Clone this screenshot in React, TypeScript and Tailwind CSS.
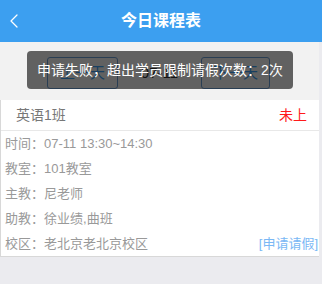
import { ChevronLeft } from "lucide-react";

const ROWS: { label: string; value: string }[] = [
  { label: "时间", value: "07-11 13:30~14:30" },
  { label: "教室", value: "101教室" },
  { label: "主教", value: "尼老师" },
  { label: "助教", value: "徐业绩,曲班" },
  { label: "校区", value: "老北京老北京校区" },
];

export default function App() {
  return (
    <div
      className="relative h-[284px] w-[322px] overflow-hidden bg-[#ebebef]"
      style={{ fontFamily: '"Liberation Sans", "Noto Sans CJK SC", sans-serif' }}
    >
      <header className="relative flex h-[42px] items-center justify-center bg-[#3c9ff0]">
        <ChevronLeft className="absolute left-[2px] top-[9px] h-[24px] w-[24px] text-white" strokeWidth={1.25} />
        <h1 className="text-[16px] font-bold text-white">今日课程表</h1>
      </header>

      <div className="w-[319px]">
        {/* day switcher, mostly hidden under the toast */}
        <div className="flex h-[58px] items-start bg-[#f2f2f2] pt-[15px]">
          <div className="ml-[47px] flex h-[32px] w-[71px] items-center justify-center rounded-[3px] border border-[#6a9bd0] text-[15px] text-[#3c9ff0]">
            上一天
          </div>
          <div className="flex h-[32px] flex-1 items-center justify-center text-[15px] text-[#333]">07-11</div>
          <div className="mr-[49px] flex h-[32px] w-[69px] items-center justify-center rounded-[3px] border border-[#6a9bd0] text-[15px] text-[#3c9ff0]">
            下一天
          </div>
        </div>

        <div className="border-b border-l border-[#d8d8d8] bg-white">
          <div className="flex h-[31px] items-center justify-between border-b border-[#e8e8e8] pl-[15px] pr-[12px] text-[14px]">
            <span className="text-[#777]">英语1班</span>
            <span className="text-[#ff1a1a]">未上</span>
          </div>
          {ROWS.map((r, i) => (
            <div key={r.label} className="flex h-[25px] items-center justify-between pl-[4px] pr-[1px] text-[13px] text-[#999]">
              <span>
                {r.label}：{r.value}
              </span>
              {i === ROWS.length - 1 && <span className="text-[#7ab8f5]">[申请请假]</span>}
            </div>
          ))}
        </div>
      </div>

      <div className="absolute left-[27px] top-[51px] flex h-[38px] w-[266px] items-center justify-center rounded-[4px] bg-black/60 text-[14px] text-white">
        申请失败，超出学员限制请假次数：2次
      </div>
    </div>
  );
}
